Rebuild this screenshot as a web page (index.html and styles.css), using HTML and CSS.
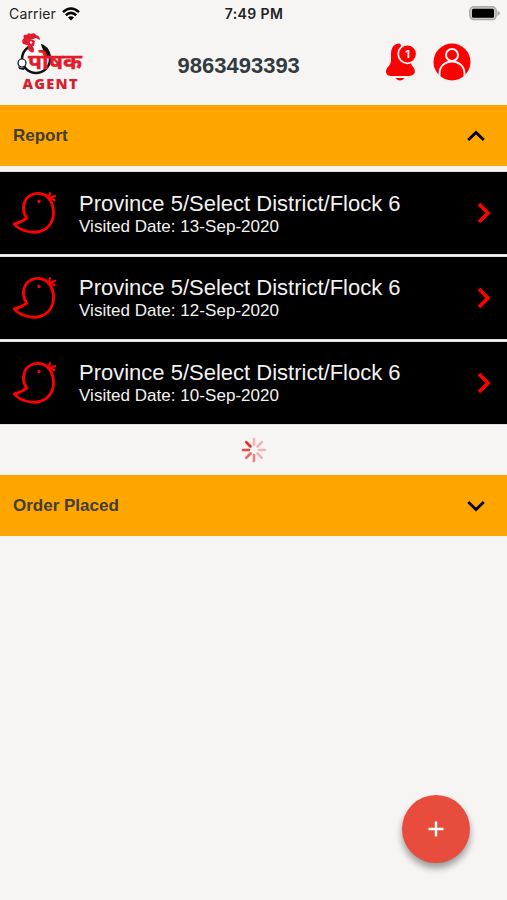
FILE: index.html
```
<!DOCTYPE html>
<html lang="en">
<head>
<meta charset="UTF-8">
<meta name="viewport" content="width=device-width, initial-scale=1.0">
<title>Agent Report</title>
<link rel="stylesheet" href="styles.css">
</head>
<body>
    <!-- shared icons -->
    <svg class="sprite" width="0" height="0">
        <symbol id="chick" viewBox="0 0 44 44">
            <path d="M14.700 27.300C9.500 20 10.500 8 19 4C26 .5 34 3 38 9C43 17 42.500 27 38 33.500C33 40.500 24 42.500 16 40.500C9 39 5 36.500 2.200 33C6 32.300 10.500 30 14.700 27.300Z"/>
            <path class="comb" d="M36.500 7.500L38 2M36.500 7.500L43 5M37 7L42.500 9"/>
            <circle class="eye" cx="27" cy="10.500" r="1.700"/>
        </symbol>
        <symbol id="arrow" viewBox="0 0 14 22">
            <path d="M2 2L11 11L2 20"/>
        </symbol>
    </svg>

    <div class="status-bar">
        <div class="carrier">
            <span>Carrier</span>
            <svg class="wifi" viewBox="0 0 18 14">
                <path d="M1 5.200Q9 -2.200 17 5.200M3.800 8.200Q9 3.600 14.200 8.200"/>
                <path class="dot" d="M6 10.600Q9 8 12 10.600L9 13.600Z"/>
            </svg>
        </div>
        <div class="time">7:49 PM</div>
        <svg class="battery" viewBox="0 0 32 16">
            <rect x=".8" y=".8" width="26.400" height="12.800" rx="4" fill="#c9c8c7" stroke="#aaa9a8" stroke-width="1.400"/>
            <rect x="3" y="2.800" width="22" height="9" rx="1.500" fill="#000"/>
            <path d="M28.500 4.500Q31 6 31 7.200Q31 8.500 28.500 10Z" fill="#aaa9a8"/>
        </svg>
    </div>

    <div class="header">
        <svg class="logo" viewBox="0 0 70 62">
            <circle cx="21" cy="27" r="14" fill="#fff" stroke="#111" stroke-width="2.500"/>
            <path d="M24 11Q34 13 36 25L29 24Q29 17 24 11Z" fill="#111"/>
            <path d="M15 5L25 8L29 24H14Z" fill="#fff"/>
            <path d="M8 12Q6 8 9 6Q7 2 12 3Q13 0 16 2Q20 0 21 3Q25 4 25 8L21 6L15 8Q11 9 12 13ZM12 10Q16 6 20 9L19 14L15 15L11 12ZM13 14Q18 13 19 17Q19 22 16 20Q12 18 13 14Z" fill="#e31b2b"/>
            <circle cx="16" cy="10.500" r="1.200" fill="#fff"/>
            <circle cx="7" cy="31" r="4" fill="#fff" stroke="#111" stroke-width="1.200"/>
            <path d="M3 34Q7 38 11 34L9 38L4 37Z" fill="#111"/>
            <text class="logo-name" x="13" y="36.500" textLength="54" lengthAdjust="spacingAndGlyphs">पोषक</text>
            <text class="logo-agent" x="7.500" y="56.500" textLength="55" lengthAdjust="spacing">AGENT</text>
        </svg>
        <div class="phone">9863493393</div>
        <div class="actions">
            <svg class="bell" viewBox="0 0 32 38">
                <path d="M15 .5C8.500 .5 6 5 6 11.500V17Q6 21 2.500 24.500Q-.5 29 2.500 32Q4 33 6 33H24Q27 33 29 31Q31 28 28.500 24.500Q26 22 25.500 19Z" fill="red"/>
                <path d="M10.500 35H19.500Q17.500 37.500 15 37.500T10.500 35Z" fill="red"/>
                <circle cx="22.500" cy="11" r="9.300" fill="red" stroke="#f6f5f4" stroke-width="1.800"/>
                <text class="badge" x="22.500" y="15" text-anchor="middle">1</text>
            </svg>
            <svg class="user" viewBox="0 0 38 38">
                <circle cx="19" cy="19" r="18.500" fill="red"/>
                <circle cx="19" cy="12" r="6" fill="none" stroke="#f6f5f4" stroke-width="2"/>
                <path d="M6.500 34V30C7 23 12 18.500 19 18.500S31 23 31.500 30V34" fill="none" stroke="#f6f5f4" stroke-width="2"/>
            </svg>
        </div>
    </div>

    <div class="panel-head">
        <span>Report</span>
        <svg class="toggle" viewBox="0 0 18 12"><path d="M1.200 10L9 2.500L16.800 10"/></svg>
    </div>

    <div class="visits">
        <div class="visit">
            <svg class="chick"><use href="#chick"/></svg>
            <div class="info">
                <div class="place">Province 5/Select District/Flock 6</div>
                <div class="date">Visited Date: 13-Sep-2020</div>
            </div>
            <svg class="arrow"><use href="#arrow"/></svg>
        </div>
        <div class="visit">
            <svg class="chick"><use href="#chick"/></svg>
            <div class="info">
                <div class="place">Province 5/Select District/Flock 6</div>
                <div class="date">Visited Date: 12-Sep-2020</div>
            </div>
            <svg class="arrow"><use href="#arrow"/></svg>
        </div>
        <div class="visit">
            <svg class="chick"><use href="#chick"/></svg>
            <div class="info">
                <div class="place">Province 5/Select District/Flock 6</div>
                <div class="date">Visited Date: 10-Sep-2020</div>
            </div>
            <svg class="arrow"><use href="#arrow"/></svg>
        </div>
    </div>

    <div class="loading">
        <svg class="spinner" viewBox="-13 -13 26 26">
            <path d="M0 -5V-11" stroke="#f4b4b4"/>
            <path d="M3.500 -3.500L7.800 -7.800" stroke="#f4b4b4"/>
            <path d="M5 0H11" stroke="#f4b4b4"/>
            <path d="M3.500 3.500L7.800 7.800" stroke="#f4b0b0"/>
            <path d="M0 5V11" stroke="#ef8080"/>
            <path d="M-3.500 3.500L-7.800 7.800" stroke="#ec6565"/>
            <path d="M-5 0H-11" stroke="#e84848"/>
            <path d="M-3.500 -3.500L-7.800 -7.800" stroke="#e42b2b"/>
        </svg>
    </div>

    <div class="panel-head">
        <span>Order Placed</span>
        <svg class="toggle" viewBox="0 0 18 12"><path d="M1.200 2L9 9.500L16.800 2"/></svg>
    </div>

    <button class="add" aria-label="Add">
        <svg viewBox="0 0 16 16"><path d="M8 .5V15.500M.5 8H15.500"/></svg>
    </button>
</body>
</html>
```
FILE: styles.css
```
* {
    box-sizing: border-box;
}
body {
    margin: 0;
    height: 900px;
    overflow: hidden;
    background-color: #f6f5f4;
    font-family: "Liberation Sans", Arial, sans-serif;
    color: #333b40;
}
svg {
    display: block;
    flex: none;
}
.sprite {
    position: absolute;
}

/* status bar */
.status-bar {
    display: grid;
    grid-template-columns: 1fr auto 1fr;
    align-items: center;
    height: 27px;
    padding: 0 6px 0 9px;
    font-family: Inter, sans-serif;
    font-size: 14px;
    color: #222;
}
.carrier {
    display: flex;
    align-items: center;
    gap: 6px;
    letter-spacing: 0.15px;
}
.wifi {
    width: 18px;
    height: 14px;
    fill: none;
    stroke: #000;
    stroke-width: 2.5;
}
.wifi .dot {
    fill: #000;
    stroke: none;
}
.time {
    padding-right: 2px;
    font-size: 14px;
    font-weight: 600;
    letter-spacing: 0.4px;
}
.battery {
    width: 32px;
    height: 16px;
    justify-self: end;
}

/* header */
.header {
    display: grid;
    grid-template-columns: 162.5px auto 1fr;
    align-items: center;
    height: 78px;
    padding: 0 36px 0 15px;
}
.logo {
    width: 70px;
    height: 62px;
    margin-bottom: 6px;
}
.logo-name {
    font-family: "Noto Sans Devanagari", "Lohit Devanagari", "Noto Sans", sans-serif;
    font-size: 21px;
    font-weight: bold;
    fill: #e31b2b;
    stroke: #e31b2b;
    stroke-width: 0.4px;
}
.logo-agent {
    font-family: "Open Sans", sans-serif;
    font-size: 14.5px;
    font-weight: 800;
    fill: #d71f30;
}
.phone {
    font-size: 22px;
    font-weight: bold;
}
.actions {
    display: flex;
    align-items: center;
    justify-content: flex-end;
    gap: 16px;
    margin-bottom: 8px;
}
.bell {
    width: 32px;
    height: 38px;
}
.badge {
    font-family: Inter, sans-serif;
    font-size: 11px;
    font-weight: bold;
    fill: #fff;
}
.user {
    width: 38px;
    height: 38px;
}

/* accordion heads */
.panel-head {
    display: flex;
    align-items: center;
    justify-content: space-between;
    height: 61px;
    padding: 0 22px 0 13px;
    background-color: #ffa500;
    font-size: 17px;
    font-weight: bold;
    color: #423e32;
}
.toggle {
    width: 18px;
    height: 12px;
    fill: none;
    stroke: #000;
    stroke-width: 2.8;
}

/* visits */
.visits {
    display: flex;
    flex-direction: column;
    gap: 3px;
    padding-top: 6.2px;
}
.visit {
    display: flex;
    align-items: center;
    height: 81.8px;
    padding: 0 16px 0 12px;
    background-color: #000;
    color: #f2f2f2;
    box-shadow: 0 0 1px #777;
}
.chick {
    width: 44px;
    height: 44px;
    fill: none;
    stroke: red;
    stroke-width: 2.8;
    stroke-linecap: round;
    stroke-linejoin: round;
}
.comb {
    stroke-width: 2.2;
}
.eye {
    fill: red;
    stroke: none;
}
.info {
    flex: 1;
    padding: 3px 0 0 23px;
}
.place {
    font-size: 22px;
    line-height: 24px;
}
.date {
    font-size: 17px;
    line-height: 22px;
    letter-spacing: 0.04px;
}
.arrow {
    width: 14px;
    height: 22px;
    fill: none;
    stroke: red;
    stroke-width: 3.6;
}

.loading {
    display: flex;
    align-items: center;
    justify-content: center;
    height: 51.6px;
    padding-top: 1px;
}
.spinner {
    width: 26px;
    height: 26px;
    fill: none;
    stroke-width: 2.6;
    stroke-linecap: round;
}

/* floating button */
.add {
    position: absolute;
    right: 37px;
    bottom: 37px;
    display: flex;
    align-items: center;
    justify-content: center;
    width: 68px;
    height: 68px;
    padding: 0;
    border: none;
    border-radius: 50%;
    background-color: #e74c3c;
    box-shadow: 0 5px 7px rgba(0, 0, 0, 0.38);
}
.add svg {
    width: 16px;
    height: 16px;
    stroke: #fff;
    stroke-width: 2.4;
}
```
